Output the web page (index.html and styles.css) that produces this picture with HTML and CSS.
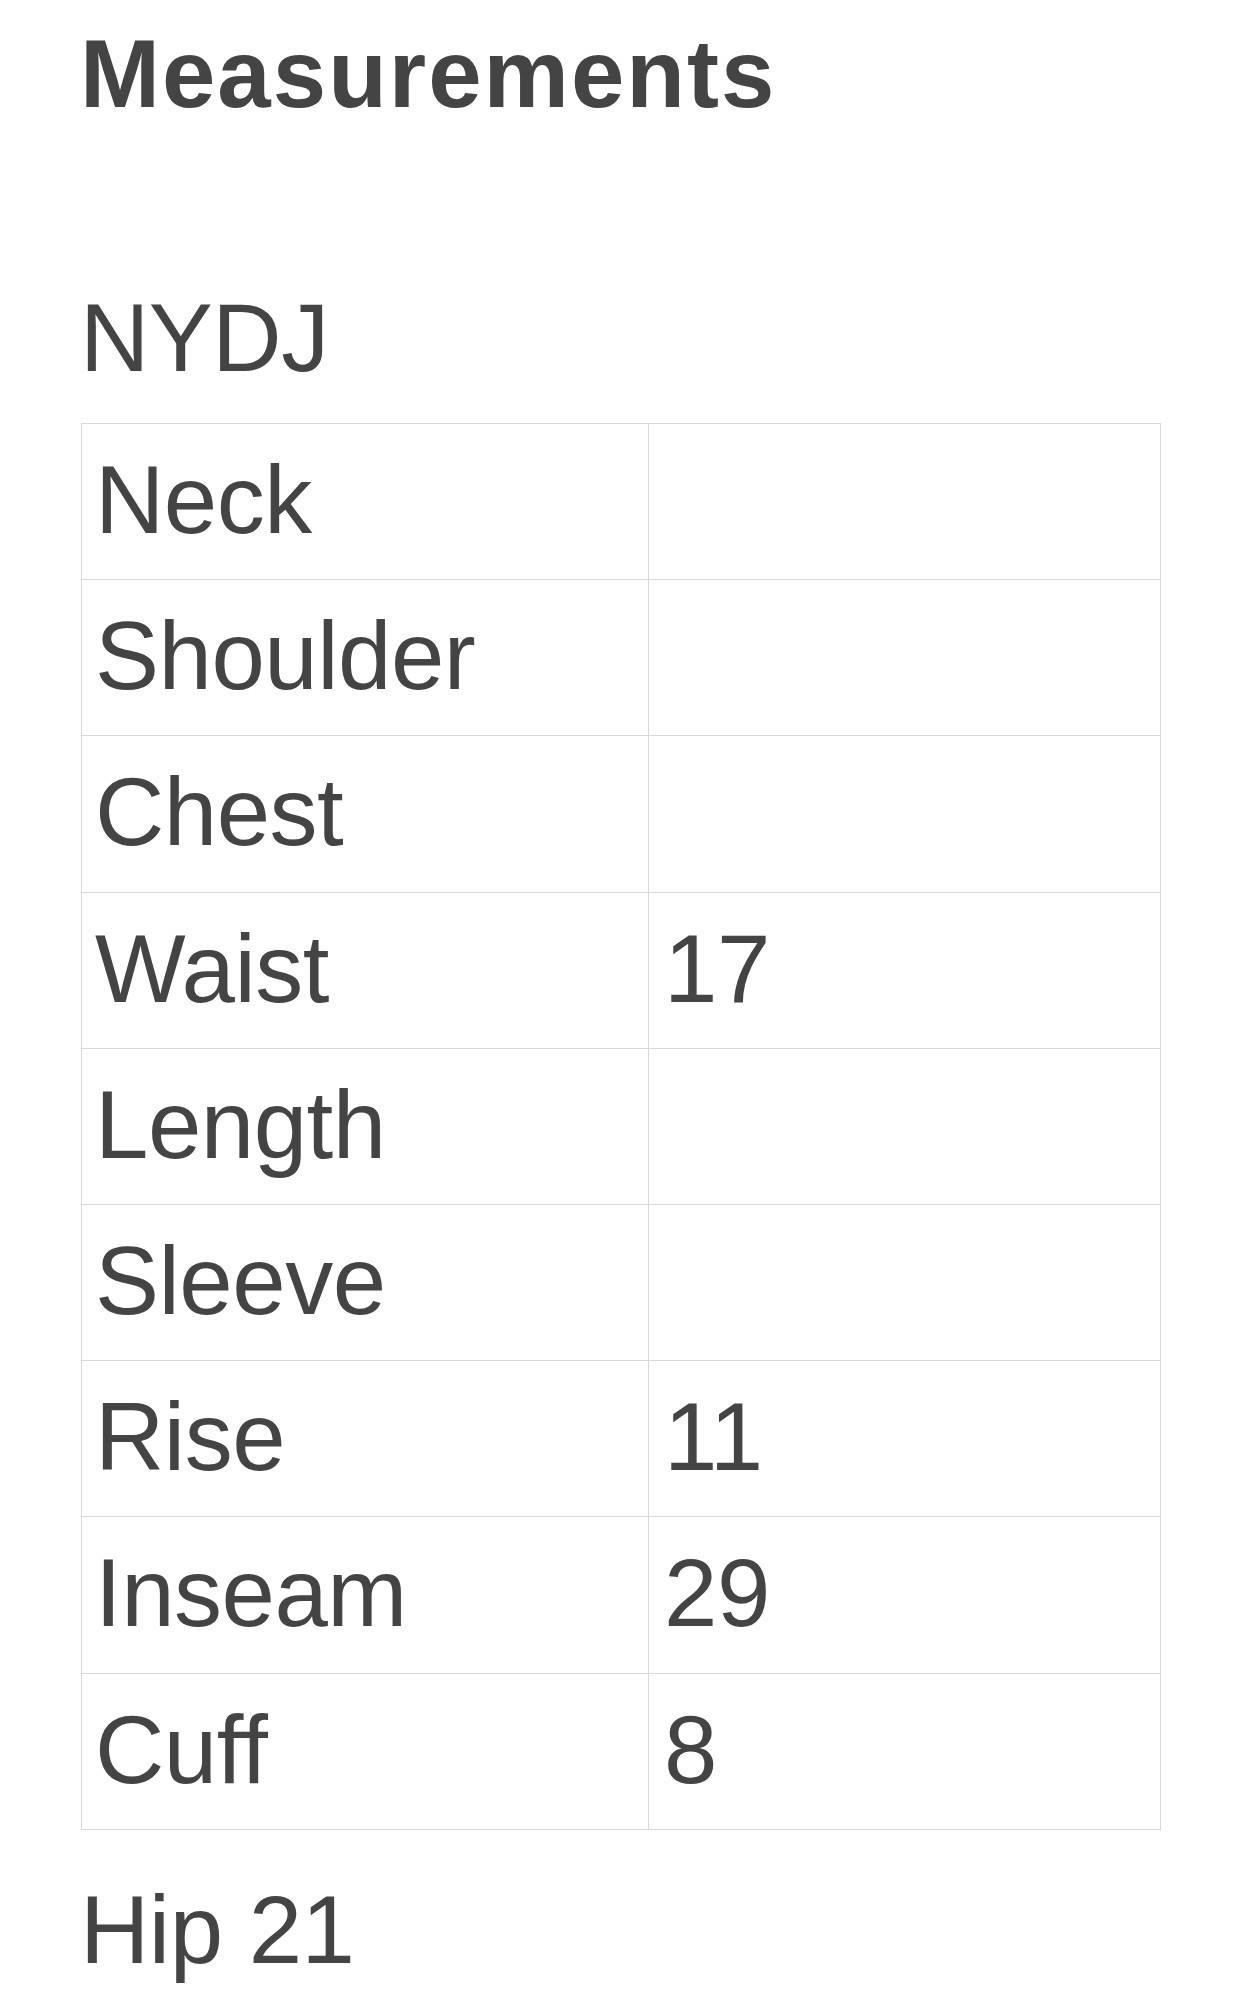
FILE: index.html
```html
<!DOCTYPE html>
<html lang="en">
<head>
<meta charset="utf-8">
<title>Measurements</title>
<link rel="stylesheet" href="styles.css">
</head>
<body>
<main class="page">
  <h1 class="title">Measurements</h1>
  <p class="brand">NYDJ</p>
  <table class="sizes">
    <colgroup>
      <col class="col-label">
      <col class="col-value">
    </colgroup>
    <tbody>
      <tr><td class="label">Neck</td><td class="value"></td></tr>
      <tr><td class="label">Shoulder</td><td class="value"></td></tr>
      <tr><td class="label">Chest</td><td class="value"></td></tr>
      <tr><td class="label">Waist</td><td class="value">17</td></tr>
      <tr><td class="label">Length</td><td class="value"></td></tr>
      <tr><td class="label">Sleeve</td><td class="value"></td></tr>
      <tr><td class="label">Rise</td><td class="value">11</td></tr>
      <tr><td class="label">Inseam</td><td class="value">29</td></tr>
      <tr><td class="label">Cuff</td><td class="value">8</td></tr>
    </tbody>
  </table>
  <p class="note">Hip 21</p>
</main>
</body>
</html>
```

FILE: styles.css
```css
html, body {
  margin: 0;
  padding: 0;
  background: #ffffff;
}

body {
  font-family: "Liberation Sans", Arial, Helvetica, sans-serif;
  color: #444444;
}

.page {
  padding: 19px 81px 0 80px;
}

.title {
  margin: 0;
  font-size: 96px;
  font-weight: 700;
  line-height: 110px;
  letter-spacing: 2px;
}

.brand {
  margin: 154px 0 0;
  font-size: 96px;
  line-height: 110px;
  letter-spacing: -0.5px;
}

.sizes {
  margin: 30px 0 0 1px;
  width: 1080px;
  border-collapse: collapse;
  table-layout: fixed;
  font-size: 96px;
  line-height: 110px;
  letter-spacing: -0.5px;
}

.col-label {
  width: 567px;
}

.sizes td {
  border: 1px solid #d9d9d9;
  padding: 21px 13px 24.2px;
  vertical-align: top;
  white-space: nowrap;
}

.sizes td.value {
  padding-left: 15px;
}

.note {
  margin: 45px 0 0;
  font-size: 96px;
  line-height: 110px;
  letter-spacing: -0.5px;
}
```
